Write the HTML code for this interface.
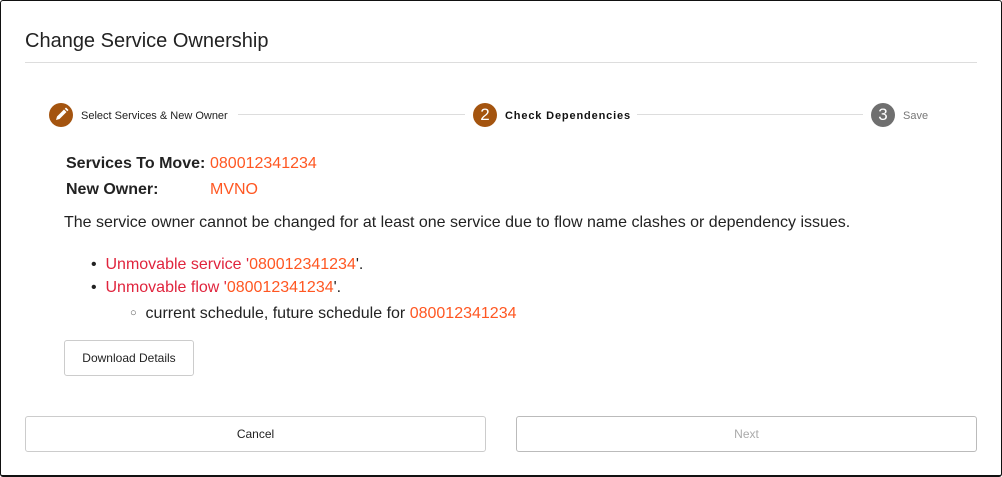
<!DOCTYPE html>
<html><head><style>
*{box-sizing:border-box;margin:0;padding:0}
body{width:1002px;height:477px;overflow:hidden;background:#fff;font-family:"Liberation Sans",Arial,sans-serif;color:#222;position:relative}
.frame{position:absolute;left:0;top:0;width:1002px;height:477px;border:1px solid #111;border-bottom-width:2px;border-radius:3px}
.abs{position:absolute;white-space:nowrap}
.title{left:25px;top:30px;font-size:20px;color:#222}
.hr{left:25px;top:62px;width:952px;height:1px;background:#ddd}
.circ{width:24px;height:24px;border-radius:50%;color:#fff;text-align:center;line-height:24px;font-size:17px}
.line{height:1px;background:#ddd;top:114px}
.step{font-size:11px;top:110px}
.org{color:#ff5722}
.red{color:#e0243d}
.btn{border:1px solid #ccc;border-radius:3px;background:#fff;text-align:center;font-size:12px}
</style></head><body>
<div class="frame"></div>
<div class="abs title">Change Service Ownership</div>
<div class="abs hr"></div>

<div class="abs circ" style="left:49px;top:103px;background:#a4540f">
<svg width="24" height="24" viewBox="0 0 24 24"><path d="M7 17l1-3.5 7-7 2.5 2.5-7 7z" fill="#fff"/><path d="M15.8 5.7l1.2-1.2 2.5 2.5-1.2 1.2z" fill="#fff"/></svg></div>
<div class="abs step" style="left:81px;color:#222">Select Services &amp; New Owner</div>
<div class="abs line" style="left:238px;width:227px"></div>
<div class="abs circ" style="left:473px;top:103px;background:#a4540f">2</div>
<div class="abs step" style="left:505px;font-weight:bold;color:#111;letter-spacing:0.85px">Check Dependencies</div>
<div class="abs line" style="left:637px;width:226px"></div>
<div class="abs circ" style="left:871px;top:103px;background:#6f6f6f">3</div>
<div class="abs step" style="left:903px;color:#777">Save</div>

<div class="abs" style="left:66px;top:155px;font-size:16px;font-weight:bold">Services To Move:</div>
<div class="abs org" style="left:210px;top:155px;font-size:16px">080012341234</div>
<div class="abs" style="left:66px;top:181px;font-size:16px;font-weight:bold">New Owner:</div>
<div class="abs org" style="left:210px;top:181px;font-size:16px">MVNO</div>
<div class="abs" style="left:64px;top:214px;font-size:16px">The service owner cannot be changed for at least one service due to flow name clashes or dependency issues.</div>

<div class="abs" style="left:91px;top:256px;font-size:16px">•&nbsp; <span class="red">Unmovable service '</span><span class="org">080012341234</span>'.</div>
<div class="abs" style="left:91px;top:279px;font-size:16px">•&nbsp; <span class="red">Unmovable flow '</span><span class="org">080012341234</span>'.</div>
<div class="abs" style="left:130px;top:305px;font-size:16px"><span style="font-size:11px;color:#555;position:relative;top:-2px">○</span>&nbsp; current schedule, future schedule for <span class="org">080012341234</span></div>

<div class="abs btn" style="left:64px;top:340px;width:130px;height:36px;line-height:34px">Download Details</div>
<div class="abs btn" style="left:25px;top:416px;width:461px;height:36px;line-height:34px;color:#222">Cancel</div>
<div class="abs btn" style="left:516px;top:416px;width:461px;height:36px;line-height:34px;color:#aaa;border-color:#bbb">Next</div>
</body></html>
